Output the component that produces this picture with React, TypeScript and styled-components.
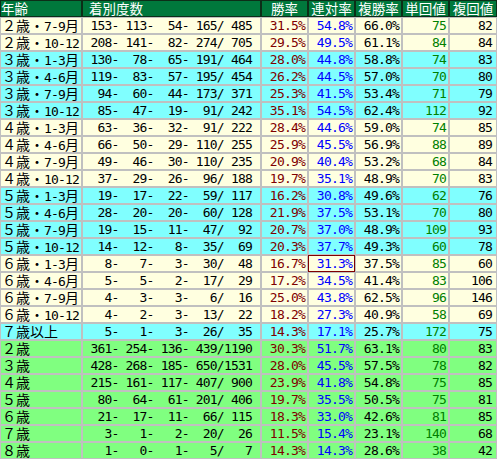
import React from 'react';
import styled, { createGlobalStyle } from 'styled-components';

const GlobalStyle = createGlobalStyle`
  html, body { margin: 0; padding: 0; background: #ffffff; }
`;

const MONO = '"DejaVu Sans Mono", "Liberation Mono", monospace';
const CJK = '"Noto Sans CJK JP", "Noto Sans", sans-serif';

type Tone = 'cream' | 'cyan' | 'green';
const TONE: Record<Tone, string> = { cream: '#ffffe0', cyan: '#80ffff', green: '#80ff80' };

const Table = styled.table`
  border-collapse: separate;
  border-spacing: 0;
  table-layout: fixed;
  width: 497px;
`;

const Col = styled.col<{ $w: number }>`
  width: ${(p) => p.$w}px;
`;

const HeadCell = styled.th<{ $align: 'left' | 'center'; $indent?: number }>`
  height: 15px;
  padding: 0 0 0 ${(p) => p.$indent ?? 0}px;
  background: #00783c;
  color: #ffffff;
  border: 1px solid #0c2e18;
  font: 400 13.5px/15px ${CJK};
  text-align: ${(p) => p.$align};
  white-space: nowrap;
`;

const Row = styled.tr<{ $tone: Tone }>`
  background: ${(p) => TONE[p.$tone]};
`;

const LabelCell = styled.td`
  height: 15px;
  padding: 0 0 0 1px;
  border: 1px solid #c0c0c0;
  font: 400 14px/15px ${CJK};
  color: #000000;
  text-align: left;
  white-space: nowrap;
`;

const Half = styled.span`
  font: 400 13px/11px ${MONO};
  letter-spacing: -0.8px;
`;

const NumCell = styled.td<{ $color?: string; $mark?: boolean; $pad?: number }>`
  height: 15px;
  padding: 0 ${(p) => p.$pad ?? 2}px 0 0;
  border: 1px solid ${(p) => (p.$mark ? '#800000' : '#c0c0c0')};
  font: 400 13px/15px ${MONO};
  letter-spacing: -0.8px;
  color: ${(p) => p.$color ?? '#000000'};
  text-align: right;
  white-space: pre;
`;

type Rec = {
  label: string;
  tone: Tone;
  c: [number, number, number, number, number];
  win: string;
  ren: string;
  fuku: string;
  tan: number;
  fkv: number;
  mark?: boolean;
};

const rows: Rec[] = [
  { label: '２歳・7-9月', tone: 'cream', c: [153, 113, 54, 165, 485], win: '31.5%', ren: '54.8%', fuku: '66.0%', tan: 75, fkv: 82 },
  { label: '２歳・10-12', tone: 'cream', c: [208, 141, 82, 274, 705], win: '29.5%', ren: '49.5%', fuku: '61.1%', tan: 84, fkv: 84 },
  { label: '３歳・1-3月', tone: 'cyan', c: [130, 78, 65, 191, 464], win: '28.0%', ren: '44.8%', fuku: '58.8%', tan: 74, fkv: 83 },
  { label: '３歳・4-6月', tone: 'cyan', c: [119, 83, 57, 195, 454], win: '26.2%', ren: '44.5%', fuku: '57.0%', tan: 70, fkv: 80 },
  { label: '３歳・7-9月', tone: 'cyan', c: [94, 60, 44, 173, 371], win: '25.3%', ren: '41.5%', fuku: '53.4%', tan: 71, fkv: 79 },
  { label: '３歳・10-12', tone: 'cyan', c: [85, 47, 19, 91, 242], win: '35.1%', ren: '54.5%', fuku: '62.4%', tan: 112, fkv: 92 },
  { label: '４歳・1-3月', tone: 'cream', c: [63, 36, 32, 91, 222], win: '28.4%', ren: '44.6%', fuku: '59.0%', tan: 74, fkv: 85 },
  { label: '４歳・4-6月', tone: 'cream', c: [66, 50, 29, 110, 255], win: '25.9%', ren: '45.5%', fuku: '56.9%', tan: 88, fkv: 89 },
  { label: '４歳・7-9月', tone: 'cream', c: [49, 46, 30, 110, 235], win: '20.9%', ren: '40.4%', fuku: '53.2%', tan: 68, fkv: 84 },
  { label: '４歳・10-12', tone: 'cream', c: [37, 29, 26, 96, 188], win: '19.7%', ren: '35.1%', fuku: '48.9%', tan: 70, fkv: 83 },
  { label: '５歳・1-3月', tone: 'cyan', c: [19, 17, 22, 59, 117], win: '16.2%', ren: '30.8%', fuku: '49.6%', tan: 62, fkv: 76 },
  { label: '５歳・4-6月', tone: 'cyan', c: [28, 20, 20, 60, 128], win: '21.9%', ren: '37.5%', fuku: '53.1%', tan: 70, fkv: 80 },
  { label: '５歳・7-9月', tone: 'cyan', c: [19, 15, 11, 47, 92], win: '20.7%', ren: '37.0%', fuku: '48.9%', tan: 109, fkv: 93 },
  { label: '５歳・10-12', tone: 'cyan', c: [14, 12, 8, 35, 69], win: '20.3%', ren: '37.7%', fuku: '49.3%', tan: 60, fkv: 78 },
  { label: '６歳・1-3月', tone: 'cream', c: [8, 7, 3, 30, 48], win: '16.7%', ren: '31.3%', fuku: '37.5%', tan: 85, fkv: 60, mark: true },
  { label: '６歳・4-6月', tone: 'cream', c: [5, 5, 2, 17, 29], win: '17.2%', ren: '34.5%', fuku: '41.4%', tan: 83, fkv: 106 },
  { label: '６歳・7-9月', tone: 'cream', c: [4, 3, 3, 6, 16], win: '25.0%', ren: '43.8%', fuku: '62.5%', tan: 96, fkv: 146 },
  { label: '６歳・10-12', tone: 'cream', c: [4, 2, 3, 13, 22], win: '18.2%', ren: '27.3%', fuku: '40.9%', tan: 58, fkv: 69 },
  { label: '７歳以上', tone: 'cyan', c: [5, 1, 3, 26, 35], win: '14.3%', ren: '17.1%', fuku: '25.7%', tan: 172, fkv: 75 },
  { label: '２歳', tone: 'green', c: [361, 254, 136, 439, 1190], win: '30.3%', ren: '51.7%', fuku: '63.1%', tan: 80, fkv: 83 },
  { label: '３歳', tone: 'green', c: [428, 268, 185, 650, 1531], win: '28.0%', ren: '45.5%', fuku: '57.5%', tan: 78, fkv: 82 },
  { label: '４歳', tone: 'green', c: [215, 161, 117, 407, 900], win: '23.9%', ren: '41.8%', fuku: '54.8%', tan: 75, fkv: 85 },
  { label: '５歳', tone: 'green', c: [80, 64, 61, 201, 406], win: '19.7%', ren: '35.5%', fuku: '50.5%', tan: 75, fkv: 81 },
  { label: '６歳', tone: 'green', c: [21, 17, 11, 66, 115], win: '18.3%', ren: '33.0%', fuku: '42.6%', tan: 81, fkv: 85 },
  { label: '７歳', tone: 'green', c: [3, 1, 2, 20, 26], win: '11.5%', ren: '15.4%', fuku: '23.1%', tan: 140, fkv: 68 },
  { label: '８歳', tone: 'green', c: [1, 0, 1, 5, 7], win: '14.3%', ren: '14.3%', fuku: '28.6%', tan: 38, fkv: 42 },
];

const pad = (n: number, w: number) => String(n).padStart(w, ' ');
const counts = (c: Rec['c']) =>
  `${pad(c[0], 3)}- ${pad(c[1], 3)}- ${pad(c[2], 3)}- ${pad(c[3], 3)}/${pad(c[4], 4)}`;

const Label: React.FC<{ text: string }> = ({ text }) => {
  const parts = text.split(/([\x20-\x7e]+)/);
  return (
    <>
      {parts.map((p, i) => (i % 2 === 1 ? <Half key={i}>{p}</Half> : <React.Fragment key={i}>{p}</React.Fragment>))}
    </>
  );
};

export default function App() {
  return (
    <>
      <GlobalStyle />
      <Table>
        <colgroup>
          <Col $w={82} />
          <Col $w={179} />
          <Col $w={47} />
          <Col $w={47} />
          <Col $w={47} />
          <Col $w={47} />
          <Col $w={48} />
        </colgroup>
        <thead>
          <tr>
            <HeadCell $align="left">年齢</HeadCell>
            <HeadCell $align="left" $indent={6}>着別度数</HeadCell>
            <HeadCell $align="center">勝率</HeadCell>
            <HeadCell $align="center">連対率</HeadCell>
            <HeadCell $align="center">複勝率</HeadCell>
            <HeadCell $align="center">単回値</HeadCell>
            <HeadCell $align="center">複回値</HeadCell>
          </tr>
        </thead>
        <tbody>
          {rows.map((r) => (
            <Row key={r.label} $tone={r.tone}>
              <LabelCell>
                <Label text={r.label} />
              </LabelCell>
              <NumCell $pad={8}>{counts(r.c)}</NumCell>
              <NumCell $color="#800000">{r.win}</NumCell>
              <NumCell $color="#0000ff" $mark={r.mark}>{r.ren}</NumCell>
              <NumCell>{r.fuku}</NumCell>
              <NumCell $color="#008000">{r.tan}</NumCell>
              <NumCell $pad={4}>{r.fkv}</NumCell>
            </Row>
          ))}
        </tbody>
      </Table>
    </>
  );
}
